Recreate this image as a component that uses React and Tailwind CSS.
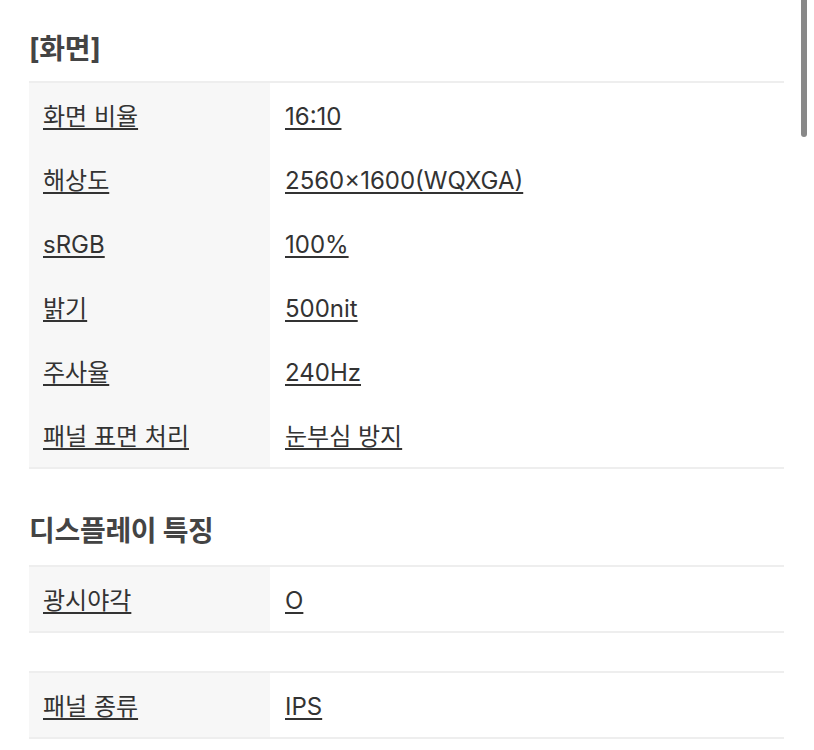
import React from 'react';

const screenSpecs = [
  { label: '화면 비율', value: '16:10' },
  { label: '해상도', value: '2560×1600(WQXGA)' },
  { label: 'sRGB', value: '100%' },
  { label: '밝기', value: '500nit' },
  { label: '주사율', value: '240Hz' },
  { label: '패널 표면 처리', value: '눈부심 방지' },
];

const SpecTable = ({ rows, className = '' }) => (
  <div className={`border-y-2 border-[#eeeeee] ${className}`}>
    {rows.map((row) => (
      <div key={row.label} className="grid grid-cols-[241px_1fr] h-[64px]">
        <div className="bg-[#f7f7f7] pl-[14px] pt-[3px] flex items-center">
          <span className="underline underline-offset-[3px] decoration-[1.5px] text-[#333]">{row.label}</span>
        </div>
        <div className="pl-[15px] pt-[3px] flex items-center">
          <span className="underline underline-offset-[3px] decoration-[1.5px] text-[#333]">{row.value}</span>
        </div>
      </div>
    ))}
  </div>
);

export default function App() {
  return (
    <div className="relative min-h-screen bg-white font-['Inter','Noto_Sans_CJK_KR',sans-serif] text-[24px] leading-[30px]">
      {/* 스크롤바 */}
      <div className="absolute right-[7px] top-0 w-[6px] h-[137px] bg-[#888] rounded-b-full" />

      <div className="ml-[29px] w-[755px] pt-[31px]">
        <h2 className="text-[28px] leading-[36px] font-bold text-[#444] tracking-[-0.3px] mb-[14px]">[화면]</h2>
        <SpecTable rows={screenSpecs} />

        <h2 className="text-[28px] leading-[36px] font-bold text-[#444] tracking-[-0.3px] mt-[44px] mb-[16px]">디스플레이 특징</h2>
        <SpecTable rows={[{ label: '광시야각', value: 'O' }]} />
        <SpecTable rows={[{ label: '패널 종류', value: 'IPS' }]} className="mt-[38px]" />
      </div>
    </div>
  );
}
